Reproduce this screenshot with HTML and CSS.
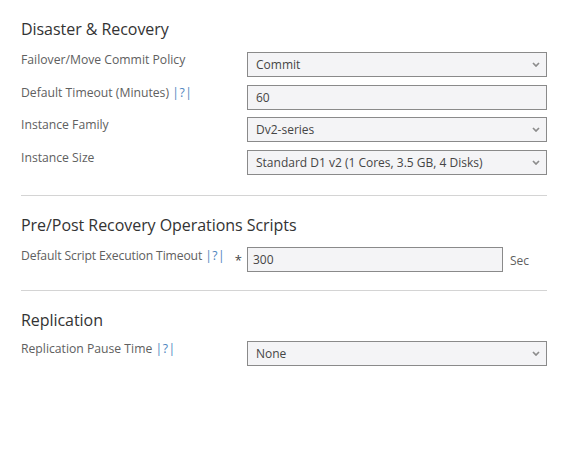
FILE: index.html
```html
<!DOCTYPE html>
<html>
<head>
<meta charset="utf-8">
<link rel="stylesheet" href="styles.css">
</head>
<body>
<div class="page">
  <section class="section">
    <h2 class="title">Disaster &amp; Recovery</h2>
    <div class="rows">
      <div class="row">
        <div class="label">Failover/Move Commit Policy</div>
        <div class="field select"><span>Commit</span><svg class="chev" viewBox="0 0 8 5"><path d="M1 1 L4 4 L7 1"/></svg></div>
      </div>
      <div class="row">
        <div class="label">Default Timeout (Minutes) <span class="help">|?|</span></div>
        <div class="field"><span>60</span></div>
      </div>
      <div class="row">
        <div class="label">Instance Family</div>
        <div class="field select"><span>Dv2-series</span><svg class="chev" viewBox="0 0 8 5"><path d="M1 1 L4 4 L7 1"/></svg></div>
      </div>
      <div class="row">
        <div class="label">Instance Size</div>
        <div class="field select"><span>Standard D1 v2 (1 Cores, 3.5 GB, 4 Disks)</span><svg class="chev" viewBox="0 0 8 5"><path d="M1 1 L4 4 L7 1"/></svg></div>
      </div>
    </div>
  </section>
  <hr class="sep">
  <section class="section">
    <h2 class="title title-mid">Pre/Post Recovery Operations Scripts</h2>
    <div class="rows">
      <div class="row">
        <div class="label label-req"><span class="tight">Default Script Execution Timeout</span><span class="help help-sp">|?|</span><span class="req">*</span></div>
        <div class="field short"><span>300</span></div>
        <div class="unit">Sec</div>
      </div>
    </div>
  </section>
  <hr class="sep sep-2">
  <section class="section">
    <h2 class="title title-last">Replication</h2>
    <div class="rows">
      <div class="row">
        <div class="label">Replication Pause Time <span class="help">|?|</span></div>
        <div class="field select"><span>None</span><svg class="chev" viewBox="0 0 8 5"><path d="M1 1 L4 4 L7 1"/></svg></div>
      </div>
    </div>
  </section>
</div>
</body>
</html>
```

FILE: styles.css
```css
html, body {
  margin: 0;
  padding: 0;
  background: #ffffff;
}
body {
  font-family: "Open Sans", "Noto Sans", "Liberation Sans", sans-serif;
  color: #555;
}
.page {
  width: 526px;
  padding: 18px 0 0 21px;
}
.section {
  display: flex;
  flex-direction: column;
}
.title {
  margin: 0 0 12px 0;
  font-size: 16px;
  line-height: 22px;
  font-weight: 400;
  color: #333;
  letter-spacing: -0.05px;
}
.title-mid {
  margin-bottom: 11px;
}
.title-last {
  margin-bottom: 10px;
}
.rows {
  display: flex;
  flex-direction: column;
  gap: 7.5px;
}
.row {
  display: flex;
  align-items: flex-start;
}
.label {
  width: 226px;
  flex: none;
  font-size: 12.2px;
  line-height: 16px;
  color: #606060;
  margin-top: 0;
}
.label-req {
  display: flex;
  align-items: flex-start;
  margin-top: 1px;
}
.tight {
  letter-spacing: -0.15px;
}
.help {
  color: #4f86c0;
  letter-spacing: 0.5px;
}
.help-sp {
  margin-left: 3px;
}
.req {
  margin-left: auto;
  margin-right: 5px;
  margin-top: 6px;
  font-size: 13px;
  line-height: 12px;
  color: #444;
}
.field {
  width: 300px;
  height: 25px;
  box-sizing: border-box;
  border: 1px solid #8a8a8a;
  background: #f4f4f6;
  display: flex;
  align-items: center;
  justify-content: space-between;
  padding: 0 6px 0 8px;
  font-size: 12px;
  color: #454545;
}
.field.short {
  width: 256px;
  padding-left: 5px;
}
.chev {
  width: 8px;
  height: 5px;
  fill: none;
  stroke: #8c8c8c;
  stroke-width: 1.7;
}
.unit {
  margin-left: 7px;
  margin-top: 6px;
  font-size: 12px;
  line-height: 16px;
  color: #606060;
}
.sep {
  width: 526px;
  margin: 20px 0 18px 0;
  border: 0;
  border-top: 1px solid #d4d4d4;
  height: 0;
}
.sep-2 {
  margin-top: 18px;
}
```
